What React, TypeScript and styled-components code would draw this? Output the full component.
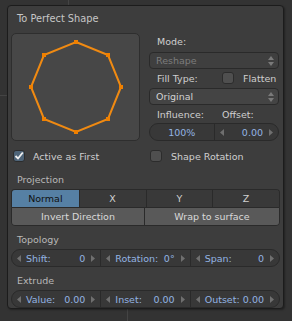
import React from 'react'
import styled, { createGlobalStyle } from 'styled-components'

const Global = createGlobalStyle`
  html, body { margin: 0; padding: 0; }
  body {
    width: 292px;
    height: 321px;
    overflow: hidden;
    background-color: #333333;
    background-image:
      linear-gradient(#444, #444),
      linear-gradient(#444, #444),
      linear-gradient(#444, #444);
    background-size: 1px 6px, 8px 1px, 1px 14px;
    background-position: 68px 0, 0 95px, 127px 308px;
    background-repeat: no-repeat;
    font-family: "DejaVu Sans", "Liberation Sans", sans-serif;
    font-size: 9.5px;
  }
`

const Panel = styled.div`
  margin: 5px 0 0 7px;
  width: 277px;
  height: 304px;
  box-sizing: border-box;
  background: #3d3d3d;
  border: 1px solid #1c1c1c;
  border-radius: 4px;
  box-shadow: 1px 1px 2px rgba(0, 0, 0, 0.35);
  padding: 0 3px;
  display: flex;
  flex-direction: column;
`

const Title = styled.div`
  height: 26px;
  line-height: 26px;
  padding-left: 6px;
  color: #c6c6c6;
  font-size: 9.8px;
`

const Top = styled.div`
  display: grid;
  grid-template-columns: 129px 130px;
  column-gap: 9px;
`

const Preview = styled.div`
  height: 108px;
  box-sizing: border-box;
  background: #474747;
  border: 1px solid #2e2e2e;
  border-radius: 5px;
  margin-top: 1px;
`

const Side = styled.div`
  display: flex;
  flex-direction: column;
  padding-top: 1px;
`

const Label = styled.div`
  height: 18px;
  line-height: 18px;
  padding-left: 8px;
  color: #cfcfcf;
`

const Row = styled.div`
  display: flex;
  align-items: center;
  height: 18px;
`

const Half = styled.div`
  flex: 1;
  display: flex;
  align-items: center;
  padding-left: 8px;
  color: #cfcfcf;
`

const Select = styled.div<{ $disabled?: boolean }>`
  height: 17px;
  box-sizing: border-box;
  border: 1px solid #2a2a2a;
  border-radius: 4px;
  background: ${p => (p.$disabled ? '#3f3f3f' : '#444444')};
  color: ${p => (p.$disabled ? '#7c7c7c' : '#d2d2d2')};
  display: flex;
  align-items: center;
  justify-content: space-between;
  padding: 0 4px 0 6px;
  margin: 1px 0 0;
`

const Check = styled.div<{ $on?: boolean }>`
  width: 12px;
  height: 12px;
  box-sizing: border-box;
  border-radius: 3px;
  border: 1px solid #2c2c2c;
  background: ${p => (p.$on ? '#4e6478' : '#4f4f4f')};
  display: flex;
  align-items: center;
  justify-content: center;
  flex-shrink: 0;
`

const CheckLine = styled.div<{ $gap?: number }>`
  display: flex;
  align-items: center;
  gap: ${p => p.$gap ?? 8}px;
  color: #cfcfcf;
`

const Fields = styled.div`
  display: flex;
  height: 18px;
  box-sizing: border-box;
  border: 1px solid #2a2a2a;
  border-radius: 9px;
  background: #383838;
  overflow: hidden;
`

const Field = styled.div<{ $center?: boolean }>`
  flex: 1;
  display: flex;
  align-items: center;
  justify-content: ${p => (p.$center ? 'center' : 'space-between')};
  padding: 0 5px;
  color: #93b4e3;
  & + & { border-left: 1px solid #2a2a2a; }
`

const FieldText = styled.span`
  flex: 1;
  display: flex;
  justify-content: space-between;
  padding: 0 6px 0 5px;
`

const Options = styled.div`
  display: flex;
  justify-content: space-between;
  margin-top: 9px;
  height: 12px;
  padding-left: 2px;
`

const Section = styled.div<{ $top: number }>`
  height: 18px;
  line-height: 18px;
  margin-top: ${p => p.$top}px;
  padding-left: 6px;
  color: #b8b8b8;
`

const Tabs = styled.div`
  display: grid;
  grid-template-columns: repeat(4, 1fr);
  height: 17px;
  border: 1px solid #2a2a2a;
  border-bottom: none;
  border-radius: 4px 4px 0 0;
  overflow: hidden;
`

const Tab = styled.div<{ $active?: boolean }>`
  display: flex;
  align-items: center;
  justify-content: center;
  background: ${p => (p.$active ? '#5680a4' : '#393939')};
  color: ${p => (p.$active ? '#101010' : '#d0d0d0')};
  & + & { border-left: 1px solid #2a2a2a; }
`

const Buttons = styled.div`
  display: grid;
  grid-template-columns: 132px 1fr;
  height: 17px;
  border: 1px solid #2a2a2a;
  border-radius: 0 0 4px 4px;
  overflow: hidden;
`

const Button = styled.div`
  display: flex;
  align-items: center;
  justify-content: center;
  background: #595959;
  color: #dadada;
  & + & { border-left: 1px solid #2a2a2a; }
`

const Arrow = ({ dir }: { dir: 'l' | 'r' }) => (
  <svg width="4" height="7" viewBox="0 0 4 7">
    <path d={dir === 'l' ? 'M4 0 L0 3.5 L4 7 Z' : 'M0 0 L4 3.5 L0 7 Z'} fill="#6f6f6f" />
  </svg>
)

const UpDown = () => (
  <svg width="6" height="10" viewBox="0 0 6 10">
    <path d="M0 4 L3 0 L6 4 Z M0 6 L3 10 L6 6 Z" fill="#7a7a7a" />
  </svg>
)

const Tick = () => (
  <svg width="10" height="10" viewBox="0 0 10 10">
    <path d="M1.5 5 L4 7.5 L8.8 1.5" stroke="#f0f0f0" strokeWidth="1.8" fill="none" />
  </svg>
)

const Num = ({ label, value }: { label: string; value: string }) => (
  <Field>
    <Arrow dir="l" />
    <FieldText>
      <span>{label}</span>
      <span>{value}</span>
    </FieldText>
    <Arrow dir="r" />
  </Field>
)

const pts: [number, number][] = [
  [64, 8], [96, 21], [109, 53], [96, 85], [64, 98], [32, 85], [19, 53], [32, 21],
]

const Octagon = () => (
  <svg width="127" height="106" viewBox="0 0 127 106">
    <polygon points={pts.map(p => p.join(',')).join(' ')} fill="none" stroke="#f08a12" strokeWidth="2" />
    {pts.map(([x, y], i) => (
      <rect key={i} x={x - 2} y={y - 2} width="4" height="4" fill="#f08000" />
    ))}
  </svg>
)

export default function App() {
  return (
    <>
      <Global />
      <Panel>
        <Title>To Perfect Shape</Title>
        <Top>
          <Preview>
            <Octagon />
          </Preview>
          <Side>
            <Label>Mode:</Label>
            <Select $disabled>
              <span>Reshape</span>
              <UpDown />
            </Select>
            <Row>
              <Half>Fill Type:</Half>
              <Half>
                <CheckLine $gap={9}>
                  <Check />
                  <span>Flatten</span>
                </CheckLine>
              </Half>
            </Row>
            <Select>
              <span>Original</span>
              <UpDown />
            </Select>
            <Row>
              <Half>Influence:</Half>
              <Half>Offset:</Half>
            </Row>
            <Fields>
              <Field $center>100%</Field>
              <Num label="" value="0.00" />
            </Fields>
          </Side>
        </Top>
        <Options>
          <CheckLine>
            <Check $on>
              <Tick />
            </Check>
            <span>Active as First</span>
          </CheckLine>
          <CheckLine $gap={9} style={{ width: 130 }}>
            <Check />
            <span>Shape Rotation</span>
          </CheckLine>
        </Options>
        <Section $top={9}>Projection</Section>
        <Tabs>
          <Tab $active>Normal</Tab>
          <Tab>X</Tab>
          <Tab>Y</Tab>
          <Tab>Z</Tab>
        </Tabs>
        <Buttons>
          <Button>Invert Direction</Button>
          <Button>Wrap to surface</Button>
        </Buttons>
        <Section $top={5}>Topology</Section>
        <Fields>
          <Num label="Shift:" value="0" />
          <Num label="Rotation:" value="0°" />
          <Num label="Span:" value="0" />
        </Fields>
        <Section $top={5}>Extrude</Section>
        <Fields>
          <Num label="Value:" value="0.00" />
          <Num label="Inset:" value="0.00" />
          <Num label="Outset:" value="0.00" />
        </Fields>
      </Panel>
    </>
  )
}
